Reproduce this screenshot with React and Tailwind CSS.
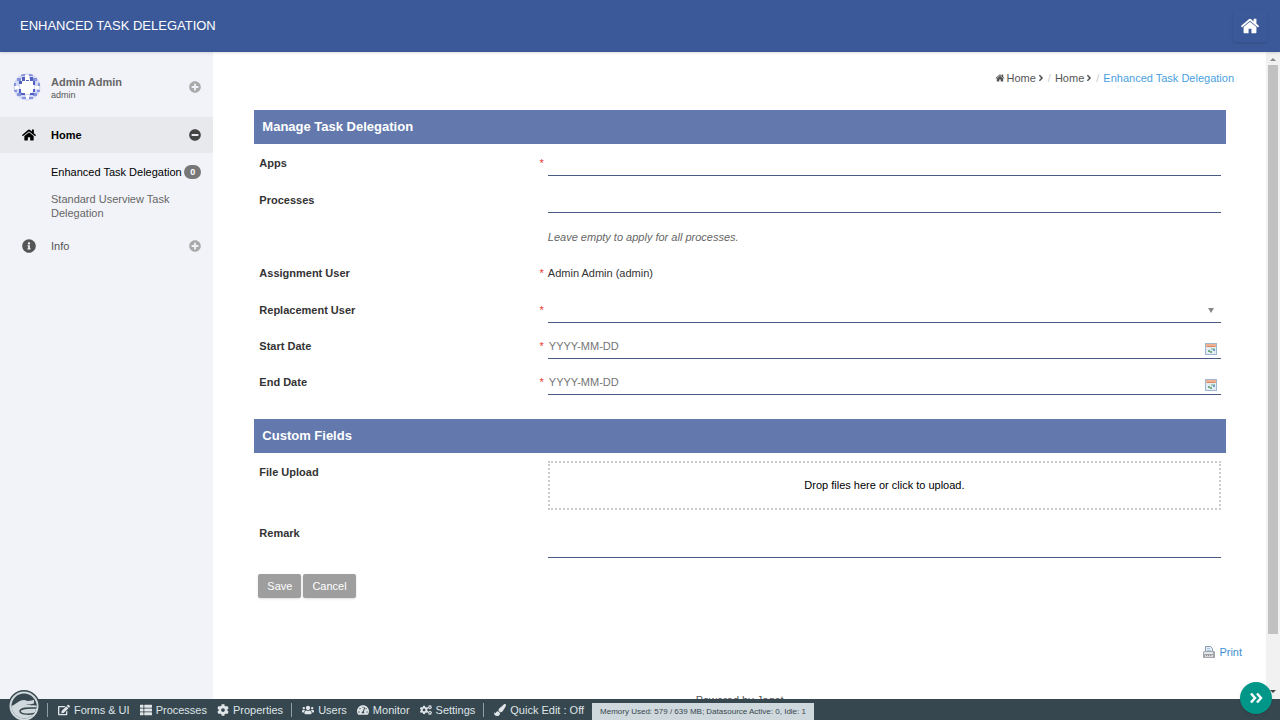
import { useState } from "react";
import {
  FaHome,
  FaPlusCircle,
  FaMinusCircle,
  FaInfoCircle,
  FaEdit,
  FaThList,
  FaCog,
  FaCogs,
  FaUsers,
  FaTachometerAlt,
  FaPaintBrush,
  FaAngleRight,
} from "react-icons/fa";

//links of the admin bar, one array per group between the separators
const adminGroups = [
  [
    { label: "Forms & UI", icon: FaEdit },
    { label: "Processes", icon: FaThList },
    { label: "Properties", icon: FaCog },
  ],
  [
    { label: "Users", icon: FaUsers },
    { label: "Monitor", icon: FaTachometerAlt },
    { label: "Settings", icon: FaCogs },
  ],
  [{ label: "Quick Edit : Off", icon: FaPaintBrush }],
];

const lineInput =
  "h-[26px] w-full border-b border-[#4a5a82] bg-transparent px-px outline-none placeholder:text-[#757575]";

function Avatar() {
  return (
    <svg viewBox="0 0 28 28" className="size-7 shrink-0" aria-hidden="true">
      <defs>
        <clipPath id="avatar">
          <circle cx="14" cy="14" r="13.5" />
        </clipPath>
      </defs>
      <g clipPath="url(#avatar)">
        <rect width="28" height="28" fill="#d3d9f5" />
        <path
          d="M4 5h4v3H4zM8 1h4v2H8zM16 1h4v2h-4zM20 5h4v3h-4zM1 10h2v3H1zM25 10h2v3h-2zM1 17h3v2H1zM24 17h3v2h-3zM4 20h4v3H4zM20 20h4v3h-4zM9 24h4v2H9zM16 24h4v2h-4z"
          fill="#8793dc"
        />
        <path d="M8 6h12v2h1v11h-2v2H9v-2H7V8h1z" fill="#fff" />
        <path d="M12 2h4v4h-4zM2 13h4v3H2zM22 13h4v3h-4zM13 22h3v4h-3z" fill="#fff" />
        <path
          d="M9 4h3v4H9zM17 4h3v4h-3zM6 8h3v3H6zM20 8h2v4h-2zM6 16h2v4H6zM8 20h4v2H8zM17 20h4v2h-4zM20 16h2v3h-2zM13 7h3v1h-3z"
          fill="#4f60c2"
        />
      </g>
    </svg>
  );
}

function Logo() {
  return (
    <svg viewBox="0 0 32 32" className="size-8" aria-hidden="true">
      <defs>
        <clipPath id="logo">
          <circle cx="16" cy="16" r="12.5" />
        </clipPath>
      </defs>
      <circle cx="16" cy="16" r="16" fill="#37474f" />
      <circle cx="16" cy="16" r="13.5" fill="#37474f" stroke="#cfd8dc" strokeWidth="2" />
      <g clipPath="url(#logo)">
        <path d="M2 16c5 0 8-6 14-6 2 0 2 1 4 1 3 0 4-1 6-1v3l4 4v15H2z" fill="#cfd8dc" />
        <path d="M18 14c4 1 8 0 12-3v5c-4-1-9 0-12-2z" fill="#37474f" />
        <path d="M30 18c-8 0-17-1-18 3 0 4 12 4 18 1" fill="none" stroke="#37474f" strokeWidth="1.500" />
      </g>
    </svg>
  );
}

//house with the thick roof, used by the header and the breadcrumb
function HouseIcon({ className }) {
  return (
    <svg viewBox="0 0 1664 1792" fill="currentColor" className={className} aria-hidden="true">
      <path d="M1408 992v480q0 26-19 45t-45 19H960v-384H704v384H320q-26 0-45-19t-19-45V992q0-1 .5-3t.5-3l575-474 575 474q1 2 1 6zm223-69l-62 74q-8 9-21 11h-3q-13 0-21-7L832 424 140 1001q-12 8-24 7-13-2-21-11l-62-74q-8-10-7-23.500t11-21.500l719-599q32-26 76-26t76 26l244 204V288q0-14 9-23t23-9h192q14 0 23 9t9 23v408l219 182q10 8 11 21.500t-7 23.500z" />
    </svg>
  );
}

function CalendarIcon() {
  return (
    <svg viewBox="0 0 12 12" className="size-3" aria-hidden="true">
      <rect x="0.5" y="0.5" width="11" height="11" fill="#e4edf5" stroke="#9db8d0" />
      <rect x="1" y="1" width="10" height="3" fill="#f0b090" />
      <path d="M2 3h8v1H2z" fill="#d98a62" />
      <path d="M6 5h4v2H6z" fill="#a9cdb6" />
      <path d="M3 7h2v2H3zM5 8h2v2H5z" fill="#74ad82" />
      <path d="M8 6h2v2H8z" fill="#6fa0cc" />
    </svg>
  );
}

function PrinterIcon() {
  return (
    <svg viewBox="0 0 12 12" className="size-3" aria-hidden="true">
      <path d="M2.500 5V.5h5l2 2V5" fill="#e6f0fa" stroke="#8f9bab" />
      <path d="M4 2.500h3M4 4.500h4" stroke="#a8c3df" />
      <path d="M1 5h10l1 1v6H0V6z" fill="#a3a6ab" />
      <path d="M1 6h9v2H1z" fill="#e3e5e8" />
      <path d="M2 9h8v2H2z" fill="#d5d7da" />
      <path d="M3 9.500h1M5 9.500h1M7 9.500h1" stroke="#8a8d92" />
    </svg>
  );
}

//label on the left, the field itself on the right
function Row({ label, htmlFor, required, className = "h-[37px]", children }) {
  return (
    <div className={`flex px-[5px] ${className}`}>
      <div className="flex w-[30%] shrink-0 justify-between pr-1 leading-9">
        <label htmlFor={htmlFor} className="font-bold text-[#333]">
          {label}
        </label>
        {required && <span className="text-[#e53935]">*</span>}
      </div>
      <div className="min-w-0 flex-1">{children}</div>
    </div>
  );
}

function SectionTitle({ children }) {
  return (
    <h2 className="h-[34px] bg-[#6379ad] px-2 text-[13px] leading-[33px] font-bold text-white">
      {children}
    </h2>
  );
}

function DateField({ id, value, onChange }) {
  return (
    <div className="relative pt-[5px]">
      <input
        id={id}
        name={id}
        value={value}
        onChange={onChange}
        placeholder="YYYY-MM-DD"
        className={lineInput}
      />
      <button type="button" aria-label="Choose date" className="absolute right-1 bottom-1">
        <CalendarIcon />
      </button>
    </div>
  );
}

function Sidebar() {
  return (
    <aside className="w-1/6 shrink-0 bg-[#f2f3f8] text-[#555]">
      <div className="flex h-[65px] items-center gap-2.5 pt-1 pr-3 pl-[13px]">
        <Avatar />
        <div className="flex-1 pt-1">
          <div className="leading-3 font-bold text-[#666]">Admin Admin</div>
          <div className="text-[9px] leading-[14px]">admin</div>
        </div>
        <FaPlusCircle className="size-3 text-[#aaa]" />
      </div>
      <nav>
        <a href="#home" className="flex h-9 items-center bg-[#e8e9ed] pr-3 pl-[22px] font-bold text-black">
          <FaHome className="mr-[15px] size-3.5" />
          <span className="flex-1">Home</span>
          <FaMinusCircle className="size-3 text-[#444]" />
        </a>
        <div className="pt-3 pr-3 pb-2 pl-[51px] leading-[14px]">
          <a href="#enhanced" className="flex items-center justify-between whitespace-nowrap text-black">
            Enhanced Task Delegation
            <span className="rounded-full bg-[#777] px-1.5 text-[9px] font-bold text-white">0</span>
          </a>
          <a href="#standard" className="mt-[13px] block text-[#666]">
            Standard Userview Task Delegation
          </a>
        </div>
        <a href="#info" className="flex h-9 items-center pr-3 pl-[22px]">
          <FaInfoCircle className="mr-[15px] size-3.5" />
          <span className="flex-1">Info</span>
          <FaPlusCircle className="size-3 text-[#aaa]" />
        </a>
      </nav>
    </aside>
  );
}

function Breadcrumb() {
  return (
    <nav className="flex h-[58px] items-center justify-end gap-1 pr-8 pb-[6px] text-[#555]">
      <a href="#root" className="flex items-center gap-0.5">
        <HouseIcon className="size-2.5" />
        Home
        <FaAngleRight className="h-2.5 w-1.5" />
      </a>
      <span className="text-[#ccc]">/</span>
      <a href="#home" className="flex items-center gap-0.5">
        Home
        <FaAngleRight className="h-2.5 w-1.5" />
      </a>
      <span className="text-[#ccc]">/</span>
      <a href="#enhanced" className="text-[#4a9fe0]">
        Enhanced Task Delegation
      </a>
    </nav>
  );
}

function DelegationForm() {
  const [formData, setFormData] = useState({
    apps: "",
    processes: "",
    replacementUser: "",
    startDate: "",
    endDate: "",
    remark: "",
  });

  const handleChange = (e) => {
    setFormData((prev) => ({
      ...prev,
      [e.target.name]: e.target.value,
    }));
  };

  const handleSubmit = (e) => {
    e.preventDefault();
  };

  return (
    <form onSubmit={handleSubmit} className="mr-10 ml-[41px]">
      <SectionTitle>Manage Task Delegation</SectionTitle>
      <div className="pt-px">
        <Row label="Apps" htmlFor="apps" required>
          <div className="pt-[5px]">
            <input id="apps" name="apps" value={formData.apps} onChange={handleChange} className={lineInput} />
          </div>
        </Row>
        <Row label="Processes" htmlFor="processes">
          <div className="pt-[5px]">
            <input
              id="processes"
              name="processes"
              value={formData.processes}
              onChange={handleChange}
              className={lineInput}
            />
          </div>
        </Row>
        <Row className="h-9">
          <p className="leading-9 text-[#666] italic">Leave empty to apply for all processes.</p>
        </Row>
        <Row label="Assignment User" required>
          <p className="leading-9 text-[#333]">Admin Admin (admin)</p>
        </Row>
        <Row label="Replacement User" htmlFor="replacementUser" required className="h-9">
          <div className="relative pt-[5px]">
            <select
              id="replacementUser"
              name="replacementUser"
              value={formData.replacementUser}
              onChange={handleChange}
              className={`${lineInput} appearance-none`}
            >
              <option value=""></option>
            </select>
            <svg
              viewBox="0 0 6 5"
              className="pointer-events-none absolute right-[7px] bottom-2.5 h-[5px] w-1.5"
              aria-hidden="true"
            >
              <path d="M0 0h6L3 5z" fill="#888" />
            </svg>
          </div>
        </Row>
        <Row label="Start Date" htmlFor="startDate" required className="h-9">
          <DateField id="startDate" value={formData.startDate} onChange={handleChange} />
        </Row>
        <Row label="End Date" htmlFor="endDate" required className="h-9">
          <DateField id="endDate" value={formData.endDate} onChange={handleChange} />
        </Row>
      </div>

      <div className="mt-[19px]">
        <SectionTitle>Custom Fields</SectionTitle>
        <Row label="File Upload" htmlFor="fileUpload" className="h-[62px] pt-px">
          <label
            htmlFor="fileUpload"
            className="mt-[7px] flex h-[49px] cursor-pointer items-center justify-center border-2 border-dotted border-[#ccc] text-black"
          >
            Drop files here or click to upload.
          </label>
          <input id="fileUpload" type="file" className="sr-only" />
        </Row>
        <Row label="Remark" htmlFor="remark" className="h-[55px]">
          <textarea
            id="remark"
            name="remark"
            value={formData.remark}
            onChange={handleChange}
            className="block h-[43px] w-full resize-none border-b border-[#4a5a82] bg-transparent p-px outline-none"
          />
        </Row>
      </div>

      <div className="mt-1 flex gap-0.5 px-1 text-white">
        <button type="submit" className="h-6 rounded-xs bg-[#9e9e9e] px-[9px] shadow">
          Save
        </button>
        <button type="button" className="h-6 rounded-xs bg-[#9e9e9e] px-[9px] shadow">
          Cancel
        </button>
      </div>
    </form>
  );
}

function ScrollRail() {
  return (
    <div className="flex w-3.5 shrink-0 flex-col items-center bg-[#f1f1f1]" aria-hidden="true">
      <svg viewBox="0 0 14 13" className="h-[13px] w-3.5">
        <path d="M4 9l3-3 3 3z" fill="#888" />
      </svg>
      <div className="h-[88%] w-2.5 bg-[#c1c1c1]" />
      <div className="flex-1" />
      <svg viewBox="0 0 14 13" className="h-[13px] w-3.5">
        <path d="M4 4l3 3 3-3z" fill="#444" />
      </svg>
    </div>
  );
}

function AdminBar() {
  return (
    <footer className="relative z-10 flex h-[21px] shrink-0 items-center bg-[#37474f] pt-px pl-[47px] text-[#dfe5e8]">
      <a href="#joget" aria-label="Joget" className="absolute -bottom-0.5 left-2">
        <Logo />
      </a>
      {adminGroups.map((group, i) => (
        <div key={i} className="mr-2 flex items-center gap-2.5 border-l border-[#90a0a8] pl-2.5">
          {group.map(({ label, icon: Icon }) => (
            <a key={label} href="#admin" className="flex items-center gap-1 leading-[14px] whitespace-nowrap">
              <Icon className="size-3" />
              {label}
            </a>
          ))}
        </div>
      ))}
      <div className="mt-0.5 bg-[#cfd8dc] px-2 text-[8px] leading-[17px] text-[#37474f]">
        Memory Used: 579 / 639 MB; Datasource Active: 0, Idle: 1
      </div>
      <button
        type="button"
        aria-label="Expand admin bar"
        className="absolute right-2 bottom-1.5 flex size-8 items-center justify-center rounded-full bg-[#009688] text-white shadow"
      >
        <svg viewBox="0 0 14 12" className="h-3 w-3.5" aria-hidden="true">
          <path d="M2 1.500L6 6l-4 4.500M8 1.500L12 6l-4 4.500" fill="none" stroke="currentColor" strokeWidth="2.500" />
        </svg>
      </button>
    </footer>
  );
}

function App() {
  return (
    <div className="flex h-screen flex-col overflow-hidden bg-white font-['Liberation_Sans',Arial,sans-serif] text-[11px]">
      <header className="relative z-10 flex h-[52px] shrink-0 items-center justify-between bg-[#3b5998] pr-[13px] pl-5 text-white shadow">
        <h1 className="text-[13px]">ENHANCED TASK DELEGATION</h1>
        <a href="#home" aria-label="Home" className="flex h-8 w-[34px] items-center justify-center rounded-xs shadow">
          <HouseIcon className="size-5" />
        </a>
      </header>

      <div className="flex min-h-0 flex-1">
        <Sidebar />
        <main className="min-w-0 flex-1 overflow-hidden">
          <Breadcrumb />
          <DelegationForm />
          <div className="mt-[46px] flex justify-end pr-6">
            <a href="#print" className="flex items-center gap-1 leading-4 text-[#3f8fd0]">
              <PrinterIcon />
              Print
            </a>
          </div>
          <p className="mt-8 text-center leading-4 text-[#555]">Powered by Joget</p>
        </main>
        <ScrollRail />
      </div>

      <AdminBar />
    </div>
  );
}

export default App;
